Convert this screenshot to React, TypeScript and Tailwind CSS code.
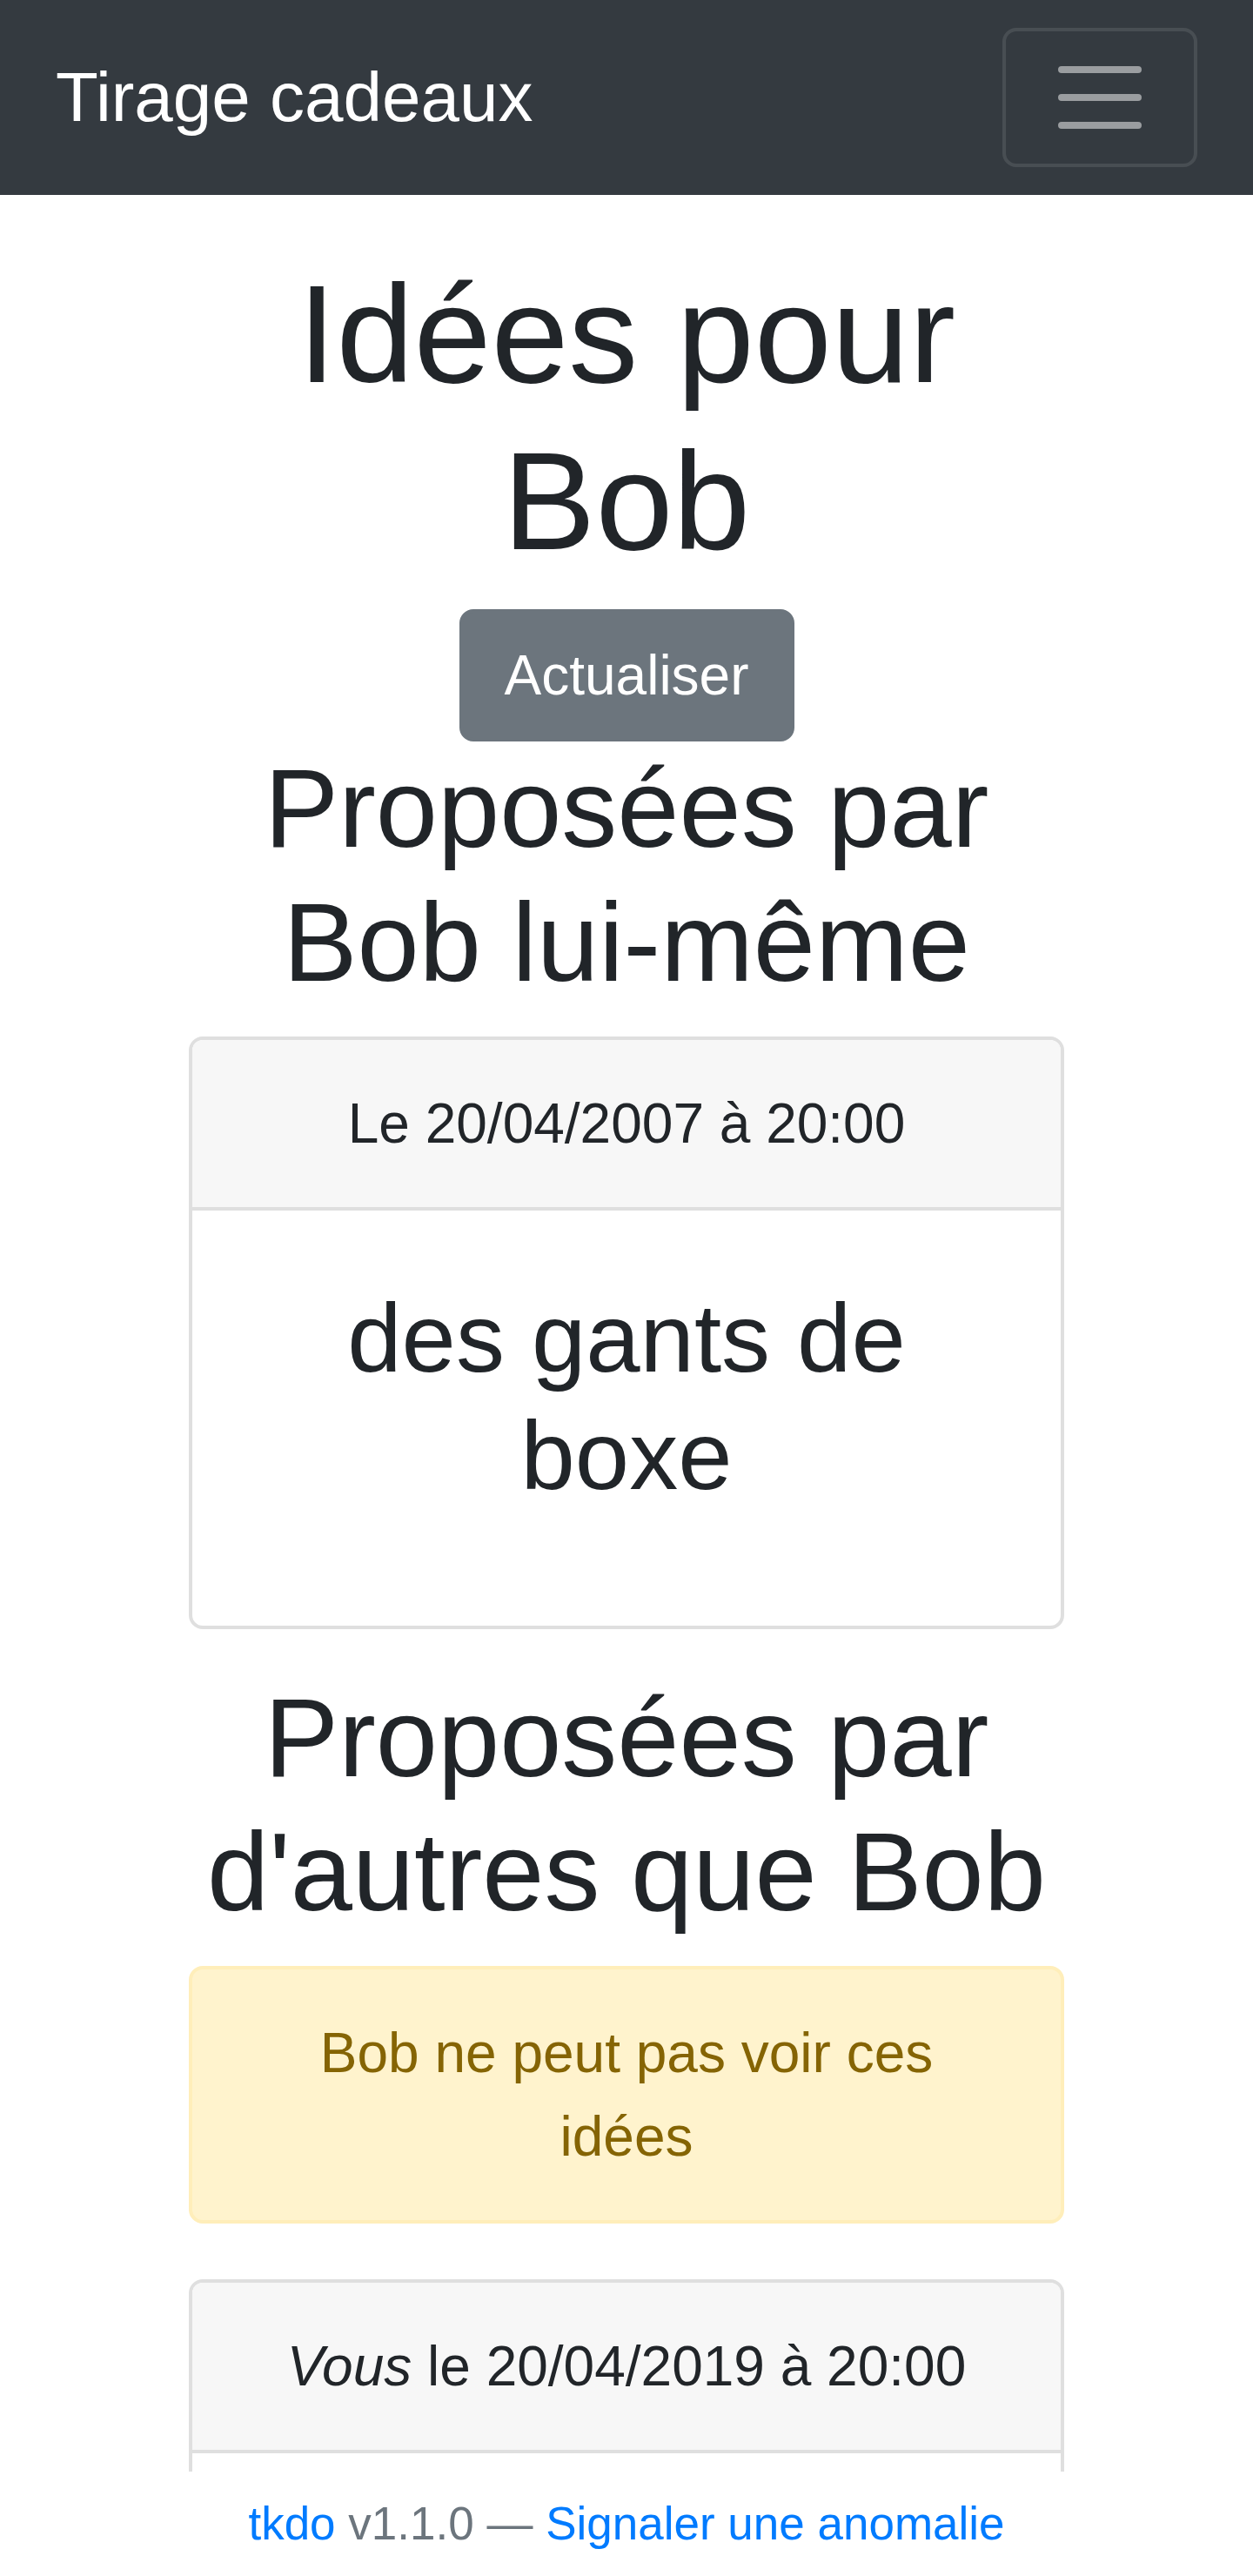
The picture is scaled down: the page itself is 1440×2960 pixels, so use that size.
import React from "react";

const Card = ({ header, children }: { header: React.ReactNode; children?: React.ReactNode }) => (
  <div className="border-4 border-[#dfdfdf] rounded-[16px] overflow-hidden mb-[48px] bg-white">
    <div className="bg-[#f7f7f7] px-[80px] py-[48px] text-[64px] leading-[96px] border-b-4 border-[#dfdfdf]">
      {header}
    </div>
    <div className="p-[80px] min-h-[160px]">{children}</div>
  </div>
);

const App = () => {
  return (
    <div
      className="relative h-[2960px] overflow-hidden bg-white text-[#212529]"
      style={{ fontFamily: '"Liberation Sans", Arial, sans-serif' }}
    >
      {/* Navbar */}
      <nav className="flex items-center justify-between bg-[#343a40] px-[64px] py-[32px]">
        <a className="text-white text-[80px] leading-[160px] whitespace-nowrap">Tirage cadeaux</a>
        <button className="w-[224px] h-[160px] border-4 border-white/10 rounded-[16px] flex items-center justify-center">
          <svg width="120" height="120" viewBox="0 0 30 30">
            <path
              d="M4 7h22M4 15h22M4 23h22"
              stroke="rgba(255,255,255,0.5)"
              strokeWidth="2"
              strokeLinecap="round"
            />
          </svg>
        </button>
      </nav>

      <main className="w-[1006px] mx-auto pt-[64px] text-center">
        <h1 className="text-[160px] leading-[1.2] font-normal mb-[28px]">Idées pour Bob</h1>
        <div>
          <button className="bg-[#6c757d] border-4 border-[#6c757d] text-white text-[64px] leading-[96px] px-[48px] py-[24px] rounded-[16px]">
            Actualiser
          </button>
        </div>

        <h2 className="text-[128px] leading-[1.2] font-normal mb-[32px]">Proposées par Bob lui-même</h2>
        <Card header="Le 20/04/2007 à 20:00">
          <h3 className="text-[112px] leading-[1.2] font-normal mb-[48px]">des gants de boxe</h3>
        </Card>

        <h2 className="text-[128px] leading-[1.2] font-normal mb-[32px]">Proposées par d'autres que Bob</h2>
        <div className="bg-[#fff3cd] border-4 border-[#ffeeba] text-[#856404] px-[80px] py-[48px] rounded-[16px] mb-[64px] text-[64px] leading-[96px]">
          Bob ne peut pas voir ces idées
        </div>

        <Card
          header={
            <>
              <em>Vous</em> le 20/04/2019 à 20:00
            </>
          }
        />
      </main>

      {/* Footer */}
      <footer className="absolute bottom-0 left-0 right-0 h-[120px] bg-white flex items-center justify-center">
        <small className="text-[53px] leading-[1.5] text-[#6c757d]">
          <a className="text-[#007bff]">tkdo</a> v1.1.0 — <a className="text-[#007bff]">Signaler une anomalie</a>
        </small>
      </footer>
    </div>
  );
};

export default App;
